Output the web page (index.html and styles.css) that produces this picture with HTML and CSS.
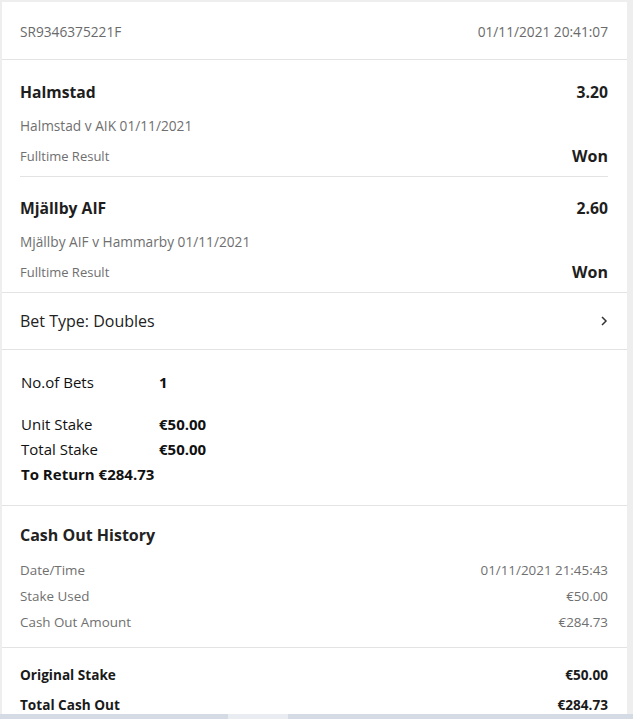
FILE: index.html
```html
<!DOCTYPE html>
<html>
<head>
	<title>Bet Receipt</title>
	<meta charset="utf-8">
	<meta name="viewport" content="width=device-width, initial-scale=1">
	<link rel="stylesheet" href="styles.css">
</head>
<body>

	<div class="receipt">

		<div class="receipt-head">
			<span>SR9346375221F</span>
			<span>01/11/2021 20:41:07</span>
		</div>

		<div class="selections">
			<div class="selection">
				<div class="row">
					<strong class="sel-name">Halmstad</strong>
					<strong class="sel-odds">3.20</strong>
				</div>
				<div class="sel-event">Halmstad v AIK 01/11/2021</div>
				<div class="row sel-result">
					<span>Fulltime Result</span>
					<strong>Won</strong>
				</div>
			</div>
			<div class="selection">
				<div class="row">
					<strong class="sel-name">Mjällby AIF</strong>
					<strong class="sel-odds">2.60</strong>
				</div>
				<div class="sel-event">Mjällby AIF v Hammarby 01/11/2021</div>
				<div class="row sel-result">
					<span>Fulltime Result</span>
					<strong>Won</strong>
				</div>
			</div>
		</div>

		<div class="bet-type row">
			<span>Bet Type: Doubles</span>
			<svg class="chevron" width="8" height="12" viewBox="0 0 8 12"><polyline points="2,2 6,6 2,10" fill="none" stroke="#333" stroke-width="1.5"/></svg>
		</div>

		<div class="stakes">
			<div class="stake-row"><span>No.of Bets</span><strong>1</strong></div>
			<div class="stake-row gap"><span>Unit Stake</span><strong>€50.00</strong></div>
			<div class="stake-row"><span>Total Stake</span><strong>€50.00</strong></div>
			<div class="stake-return">To Return €284.73</div>
		</div>

		<div class="cashout">
			<h2>Cash Out History</h2>
			<div class="row co-row first"><span>Date/Time</span><span>01/11/2021 21:45:43</span></div>
			<div class="row co-row"><span>Stake Used</span><span>€50.00</span></div>
			<div class="row co-row"><span>Cash Out Amount</span><span>€284.73</span></div>
		</div>

		<div class="totals">
			<div class="row total-row"><span>Original Stake</span><span>€50.00</span></div>
			<div class="row total-row"><span>Total Cash Out</span><span>€284.73</span></div>
		</div>

	</div>

	<div class="scrollbar"><div class="scrollbar-thumb"></div></div>

</body>
</html>
```

FILE: styles.css
```css
*,
*:before,
*:after {
	box-sizing: border-box;
}

body {
	margin: 0;
	background-color: #eeeeee;
	font-family: "Open Sans", "Liberation Sans", sans-serif;
	color: #1e1e1e;
}

.receipt {
	margin: 2px 6px 0 2px;
	background-color: #ffffff;
}

.row {
	display: flex;
	justify-content: space-between;
	align-items: center;
}

.receipt-head {
	display: flex;
	justify-content: space-between;
	padding: 20px 19px 18px 18px;
	font-size: 13.7px;
	line-height: 19px;
	color: #6a6a6a;
	border-bottom: 1px solid #e3e3e3;
}

.selections {
	padding: 0 19px 0 18px;
	border-bottom: 1px solid #e3e3e3;
}

.selection {
	padding: 20px 0 8px;
}

.selection + .selection {
	border-top: 1px solid #e3e3e3;
	padding-top: 19px;
}

.sel-name,
.sel-odds {
	font-size: 15.7px;
	line-height: 24px;
	font-weight: 700;
}

.sel-event {
	margin-top: 12px;
	font-size: 13.7px;
	line-height: 20px;
	color: #6f6f6f;
}

.sel-result {
	margin-top: 8px;
	line-height: 24px;
}

.sel-result span {
	font-size: 13px;
	color: #6f6f6f;
}

.sel-result strong {
	font-size: 16px;
	font-weight: 700;
}

.bet-type {
	padding: 16px 19px 16px 18px;
	font-size: 16px;
	line-height: 24px;
	color: #222222;
	border-bottom: 1px solid #e3e3e3;
}

.chevron {
	display: block;
}

.stakes {
	padding: 22px 19px 21px 19px;
	font-size: 15px;
	line-height: 20px;
	color: #111111;
	border-bottom: 1px solid #e3e3e3;
}

.stake-row {
	display: flex;
	margin-bottom: 5px;
}

.stake-row span {
	width: 138px;
}

.stake-row.gap {
	margin-top: 22px;
}

.stake-return {
	font-weight: 700;
}

.cashout {
	padding: 17px 19px 15px 18px;
	border-bottom: 1px solid #e3e3e3;
}

.cashout h2 {
	margin: 0;
	font-size: 16px;
	line-height: 24px;
	font-weight: 700;
	color: #222222;
}

.co-row {
	margin-top: 6px;
	font-size: 13.4px;
	line-height: 20px;
	color: #707070;
}

.co-row.first {
	margin-top: 13px;
}

.totals {
	padding: 17px 19px 20px 18px;
}

.total-row {
	font-size: 13.6px;
	line-height: 20px;
	font-weight: 700;
	color: #1a1a1a;
}

.total-row + .total-row {
	margin-top: 10px;
}

.scrollbar {
	position: fixed;
	left: 0;
	right: 0;
	bottom: 0;
	height: 5px;
	background-color: #d5dbe5;
}

.scrollbar-thumb {
	margin-left: 228px;
	width: 60px;
	height: 5px;
	background-color: #e9ecf1;
}
```
